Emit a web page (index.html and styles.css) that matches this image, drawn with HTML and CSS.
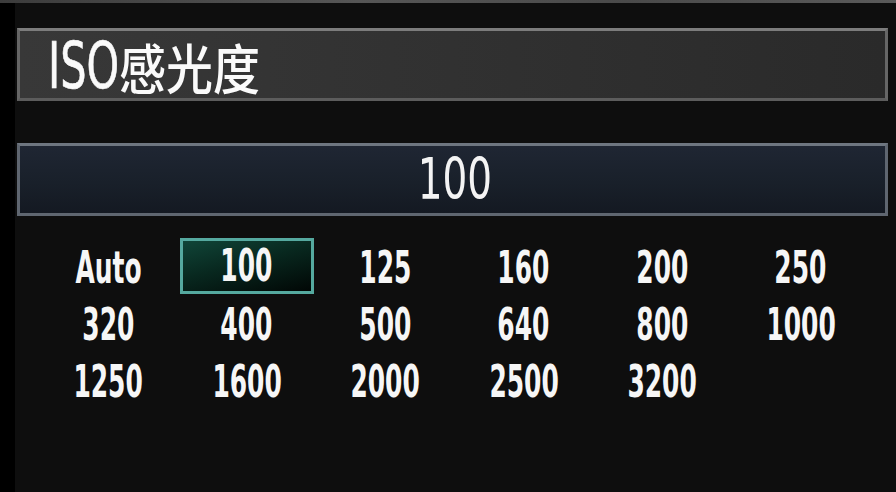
FILE: index.html
```html
<!DOCTYPE html>
<html lang="zh">
<head>
<meta charset="utf-8">
<title>ISO感光度</title>
<link rel="stylesheet" href="styles.css">
</head>
<body>
<div class="screen">
  <div class="topline"></div>
  <div class="frame">
    <div class="edge"></div>
    <main class="panel">
      <header class="title-bar">
        <h1 class="title"><span class="title-latin">ISO</span><span class="title-cjk">感光度</span></h1>
      </header>
      <div class="value-bar"><span class="value">100</span></div>
      <ul class="iso-grid">
        <li><span class="iso">Auto</span></li>
        <li class="selected"><span class="iso">100</span></li>
        <li><span class="iso">125</span></li>
        <li><span class="iso">160</span></li>
        <li><span class="iso">200</span></li>
        <li><span class="iso">250</span></li>
        <li><span class="iso">320</span></li>
        <li><span class="iso">400</span></li>
        <li><span class="iso">500</span></li>
        <li><span class="iso">640</span></li>
        <li><span class="iso">800</span></li>
        <li><span class="iso">1000</span></li>
        <li><span class="iso">1250</span></li>
        <li><span class="iso">1600</span></li>
        <li><span class="iso">2000</span></li>
        <li><span class="iso">2500</span></li>
        <li><span class="iso">3200</span></li>
      </ul>
    </main>
  </div>
</div>
</body>
</html>
```

FILE: styles.css
```css
* {
  box-sizing: border-box;
}

html,
body {
  margin: 0;
  padding: 0;
  background: #000;
}

.screen {
  width: 896px;
  height: 492px;
  display: flex;
  flex-direction: column;
  background: #000;
  overflow: hidden;
  color: #f4f4f4;
}

/* thin strip left over from the screen above */
.topline {
  height: 3px;
  background: linear-gradient(90deg, #3c3c3c, #565656 40%, #4a4a4a 70%, #5a5a5a);
}

.frame {
  flex: 1;
  display: flex;
}

.edge {
  width: 15px;
  background: #000;
}

.panel {
  flex: 1;
  display: flex;
  flex-direction: column;
  padding: 25px 8px 0 2px;
  background: #0e0e0e;
}

/* menu header */
.title-bar {
  height: 73px;
  display: flex;
  align-items: center;
  padding: 3px 0 0 28px;
  border: 3px solid #666;
  border-top-color: #7c7c7c;
  border-bottom-color: #5c5c5c;
  background: linear-gradient(90deg, #383838 0%, #313131 50%, #2a2a2a 100%);
}

.title {
  margin: 0;
  display: flex;
  align-items: center;
  font-weight: normal;
  line-height: 1;
  white-space: nowrap;
  color: #fafafa;
}

.title-latin {
  display: inline-block;
  font-family: "DejaVu Sans Condensed", "DejaVu Sans", sans-serif;
  font-size: 64px;
  transform: scaleX(0.72);
  transform-origin: left center;
  margin-right: -28px;
  -webkit-text-stroke: 0.6px #fafafa;
}

.title-cjk {
  display: inline-block;
  font-family: "Noto Sans CJK SC", sans-serif;
  font-size: 54px;
  font-weight: 500;
  transform: scaleX(0.87);
  transform-origin: left center;
  margin-top: 1px;
}

/* current value */
.value-bar {
  margin-top: 42px;
  height: 73px;
  display: flex;
  align-items: center;
  justify-content: center;
  padding-left: 5px;
  border: 3px solid #5f6670;
  border-top-color: #6e7680;
  background: linear-gradient(180deg, #1f2633 0%, #19202a 55%, #141922 100%);
}

.value {
  display: inline-block;
  font-family: "DejaVu Sans Condensed", "DejaVu Sans", sans-serif;
  font-size: 57px;
  line-height: 1;
  transform: scaleX(0.76);
}

/* selectable values */
.iso-grid {
  list-style: none;
  margin: 24px 0 0 22px;
  padding: 0;
  display: grid;
  grid-template-columns: repeat(6, 138.5px);
  grid-auto-rows: 57px;
}

.iso-grid li {
  display: flex;
  align-items: center;
  justify-content: center;
  margin: 0 0 1px;
}

.iso-grid li.selected {
  margin: -2px 2px 3px;
  border: 3px solid #55a99f;
  background: linear-gradient(165deg, #104538 0%, #08281f 45%, #010705 100%);
}

.iso {
  display: inline-block;
  font-family: "DejaVu Sans Condensed", "DejaVu Sans", sans-serif;
  font-weight: bold;
  font-size: 44px;
  line-height: 1;
  transform: scaleX(0.63);
  color: #f6f6f6;
}
```
